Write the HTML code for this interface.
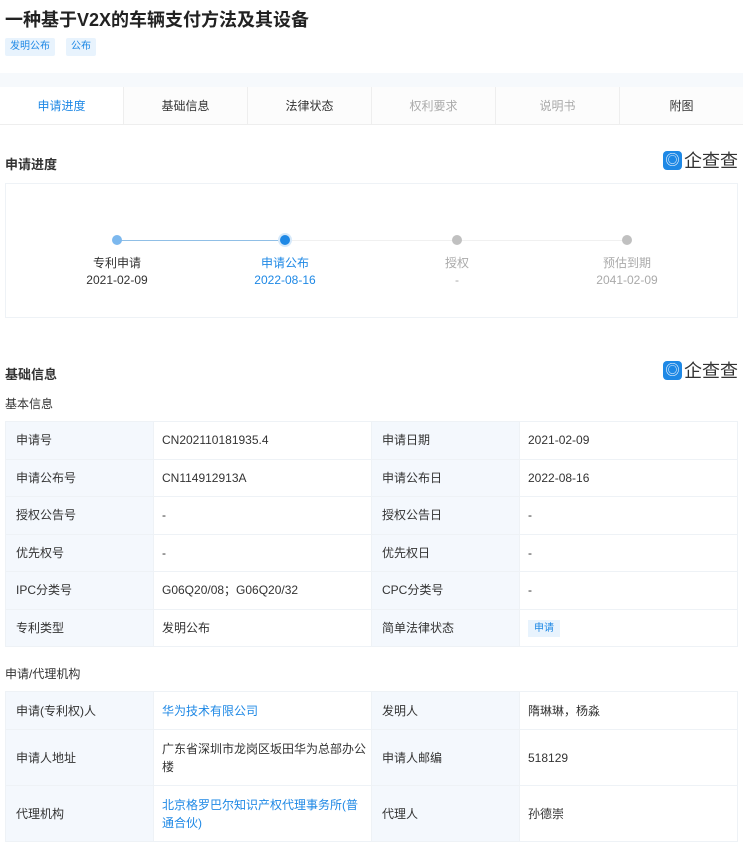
<!DOCTYPE html><html><head><meta charset="utf-8"><style>
*{margin:0;padding:0;box-sizing:border-box}
body{width:743px;height:842px;overflow:hidden;background:#fff;font-family:"Liberation Sans","Noto Sans CJK SC",sans-serif;color:#333;font-size:12px;position:relative}
.a{position:absolute}
.tag{position:absolute;top:38px;height:18px;line-height:18px;background:#e8f3fd;color:#1e88e5;font-size:10px;padding:0 5px;border-radius:2px}
.tabs{position:absolute;top:87px;left:0;width:743px;height:38px;border-bottom:1px solid #eee;display:flex}
.tabs div{flex:1;text-align:center;line-height:38px;font-size:12px;border-left:1px solid #eee;background:#fcfcfc}
.tabs div:first-child{border-left:none;background:#fff;color:#1e88e5}
.h{position:absolute;left:5px;font-size:13px;font-weight:bold;color:#333}
.logo{position:absolute;right:5px;font-size:18px;color:#333;display:flex;align-items:center;gap:2px}
.logo i{display:inline-block;width:19px;height:19px;background:#1e88e5;border-radius:4px;color:#fff;font-style:normal;font-size:14px;line-height:19px;text-align:center}
table{position:absolute;left:5px;width:733px;border-collapse:collapse;font-size:12px;table-layout:fixed}
td{border:1px solid #eef2f6;padding:0 8px;vertical-align:middle;line-height:18px}
td.l{background:#f4f8fd;width:148px;padding-left:10px}
td.v{width:218px}
td.l2{background:#f4f8fd;width:148px;padding-left:10px}
.nw{white-space:nowrap;overflow:hidden}
.blue{color:#1e88e5}
.dot{position:absolute;top:235px;width:10px;height:10px;border-radius:50%;margin-left:-5px}
.st{position:absolute;width:120px;margin-left:-60px;text-align:center;font-size:12px}
</style></head><body>
<div class="a" style="left:5px;top:6px;font-size:18px;font-weight:bold;color:#222">一种基于V2X的车辆支付方法及其设备</div>
<div class="tag" style="left:5px">发明公布</div><div class="tag" style="left:66px">公布</div>
<div class="a" style="left:0;top:73px;width:743px;height:14px;background:#f6f9fc"></div>
<div class="tabs"><div>申请进度</div><div>基础信息</div><div>法律状态</div><div style="color:#aaa">权利要求</div><div style="color:#aaa">说明书</div><div>附图</div></div>
<div class="h" style="top:154px">申请进度</div>
<div class="logo" style="top:147px"><i>◎</i>企查查</div>
<div class="a" style="left:5px;top:183px;width:733px;height:135px;border:1px solid #eef2f6"></div>
<div class="a" style="left:117px;top:240px;width:168px;height:1px;background:#90bfe6"></div>
<div class="a" style="left:285px;top:240px;width:342px;height:1px;background:#f0f0f0"></div>
<div class="dot" style="left:117px;background:#7cb8ee"></div>
<div class="dot" style="left:285px;background:#1e88e5;box-shadow:0 0 0 2px #d6e9fa"></div>
<div class="dot" style="left:457px;background:#c0c0c0"></div>
<div class="dot" style="left:627px;background:#c0c0c0"></div>
<div class="st" style="left:117px;top:254px">专利申请</div><div class="st" style="left:117px;top:273px">2021-02-09</div>
<div class="st blue" style="left:285px;top:254px">申请公布</div><div class="st blue" style="left:285px;top:273px">2022-08-16</div>
<div class="st" style="left:457px;top:254px;color:#aaa">授权</div><div class="st" style="left:457px;top:273px;color:#aaa">-</div>
<div class="st" style="left:627px;top:254px;color:#aaa">预估到期</div><div class="st" style="left:627px;top:273px;color:#aaa">2041-02-09</div>
<div class="h" style="top:364px">基础信息</div>
<div class="logo" style="top:357px"><i>◎</i>企查查</div>
<div class="a" style="left:5px;top:395px;font-size:12px">基本信息</div>
<table style="top:421px">
<colgroup><col style="width:148px"><col style="width:218px"><col style="width:148px"><col></colgroup>
<tr style="height:37.5px"><td class="l">申请号</td><td class="v">CN202110181935.4</td><td class="l2">申请日期</td><td>2021-02-09</td></tr>
<tr style="height:37.5px"><td class="l">申请公布号</td><td class="v">CN114912913A</td><td class="l2">申请公布日</td><td>2022-08-16</td></tr>
<tr style="height:37.5px"><td class="l">授权公告号</td><td class="v">-</td><td class="l2">授权公告日</td><td>-</td></tr>
<tr style="height:37.5px"><td class="l">优先权号</td><td class="v">-</td><td class="l2">优先权日</td><td>-</td></tr>
<tr style="height:37.5px"><td class="l">IPC分类号</td><td class="v">G06Q20/08；G06Q20/32</td><td class="l2">CPC分类号</td><td>-</td></tr>
<tr style="height:37.5px"><td class="l">专利类型</td><td class="v">发明公布</td><td class="l2">简单法律状态</td><td><span style="background:#e8f3fd;color:#1e88e5;font-size:10px;padding:3px 6px">申请</span></td></tr>
</table>
<div class="a" style="left:5px;top:665px;font-size:12px">申请/代理机构</div>
<table style="top:691px">
<colgroup><col style="width:148px"><col style="width:218px"><col style="width:148px"><col></colgroup>
<tr style="height:38px"><td class="l">申请(专利权)人</td><td class="v blue">华为技术有限公司</td><td class="l2">发明人</td><td>隋琳琳，杨淼</td></tr>
<tr style="height:56px"><td class="l">申请人地址</td><td class="v nw">广东省深圳市龙岗区坂田华为总部办公<br>楼</td><td class="l2">申请人邮编</td><td>518129</td></tr>
<tr style="height:56px"><td class="l">代理机构</td><td class="v blue nw">北京格罗巴尔知识产权代理事务所(普<br>通合伙)</td><td class="l2">代理人</td><td>孙德崇</td></tr>
</table>
</body></html>
